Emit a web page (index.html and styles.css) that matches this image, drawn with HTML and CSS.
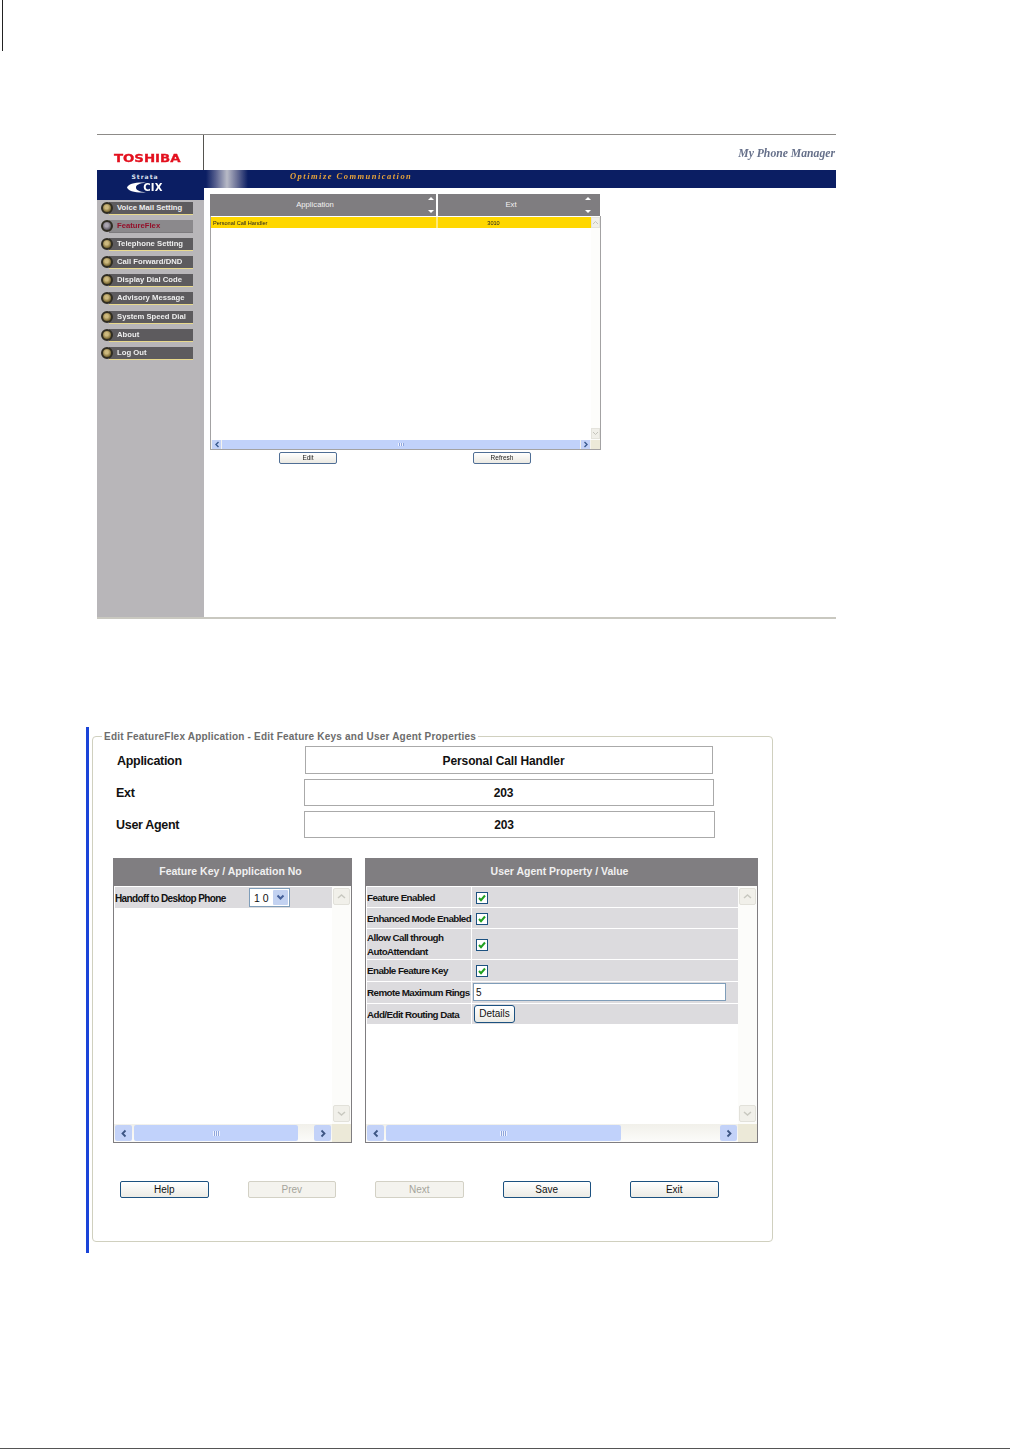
FILE: index.html
```html
<!DOCTYPE html>
<html lang="en">
<head>
<meta charset="utf-8">
<title>My Phone Manager</title>
<link rel="stylesheet" href="styles.css">
</head>
<body>
<div class="crop-mark"></div>

<section class="app">
  <div class="app-left">
    <div class="logo-cell"><span class="toshiba">TOSHIBA</span></div>
    <div class="brand">
      <span class="brand-strata">Strata</span>
      <span class="brand-cix"><svg class="swoosh" width="19" height="11" viewBox="0 0 19 11"><path d="M19 0.5C8 0 1 2 0 5.5C1 9 8 11 19 10.5C12 9.5 9 8 9 5.5C9 3 12 1.5 19 0.5Z" fill="#fff"/></svg><span>CIX</span></span>
    </div>
    <nav class="nav">
      <a class="nav-item"><i class="bullet"></i><span class="nav-label">Voice Mail Setting</span></a>
      <a class="nav-item nav-active"><i class="bullet"></i><span class="nav-label">FeatureFlex</span></a>
      <a class="nav-item"><i class="bullet"></i><span class="nav-label">Telephone Setting</span></a>
      <a class="nav-item"><i class="bullet"></i><span class="nav-label">Call Forward/DND</span></a>
      <a class="nav-item"><i class="bullet"></i><span class="nav-label">Display Dial Code</span></a>
      <a class="nav-item"><i class="bullet"></i><span class="nav-label">Advisory Message</span></a>
      <a class="nav-item"><i class="bullet"></i><span class="nav-label">System Speed Dial</span></a>
      <a class="nav-item"><i class="bullet"></i><span class="nav-label">About</span></a>
      <a class="nav-item"><i class="bullet"></i><span class="nav-label">Log Out</span></a>
    </nav>
  </div>
  <div class="app-right">
    <header class="app-head"><span class="app-title">My Phone Manager</span></header>
    <div class="banner"><span class="banner-text">Optimize Communication</span></div>
    <div class="content">
      <div class="list-head">
        <div class="lh-cell lh-app"><span>Application</span><i class="sort"><b class="sort-up"></b><b class="sort-down"></b></i></div>
        <div class="lh-cell lh-ext"><span>Ext</span><i class="sort"><b class="sort-up"></b><b class="sort-down"></b></i></div>
      </div>
      <div class="list-box">
        <div class="list-main">
          <div class="list-rows">
            <div class="list-row"><span class="lr-app">Personal Call Handler</span><span class="lr-ext">3010</span></div>
          </div>
          <div class="mini-v">
            <span class="mini-vbtn"><svg width="7" height="5" viewBox="0 0 7 5"><path d="M1 4L3.5 1.5L6 4" fill="none" stroke="#c4c4bc"/></svg></span>
            <span class="mini-vbtn"><svg width="7" height="5" viewBox="0 0 7 5"><path d="M1 1L3.5 3.5L6 1" fill="none" stroke="#c4c4bc"/></svg></span>
          </div>
        </div>
        <div class="mini-h">
          <span class="mini-hbtn"><svg width="6" height="7" viewBox="0 0 6 7"><path d="M4.5 1L2 3.5L4.5 6" fill="none" stroke="#3a5a90" stroke-width="1.4"/></svg></span>
          <span class="mini-thumb"><span class="grip"></span></span>
          <span class="mini-hbtn"><svg width="6" height="7" viewBox="0 0 6 7"><path d="M1.5 1L4 3.5L1.5 6" fill="none" stroke="#3a5a90" stroke-width="1.4"/></svg></span>
          <span class="mini-corner"></span>
        </div>
      </div>
      <div class="list-actions">
        <button class="mini-button" type="button">Edit</button>
        <button class="mini-button" type="button">Refresh</button>
      </div>
    </div>
  </div>
</section>
<div class="app-rule"></div>

<section class="editor">
  <fieldset class="frame">
    <legend class="frame-legend">Edit FeatureFlex Application - Edit Feature Keys and User Agent Properties</legend>

    <div class="field field-a"><span class="field-label">Application</span><div class="field-box">Personal Call Handler</div></div>
    <div class="field field-b"><span class="field-label">Ext</span><div class="field-box">203</div></div>
    <div class="field field-c"><span class="field-label">User Agent</span><div class="field-box">203</div></div>

    <div class="tables">
      <div class="tbl tbl-left">
        <div class="tbl-head">Feature Key / Application No</div>
        <div class="tbl-main">
          <div class="tbl-rows">
            <div class="key-row">
              <span class="key-label">Handoff to Desktop Phone</span>
              <span class="select"><span class="select-val">1 0</span><span class="select-btn"><svg width="9" height="7" viewBox="0 0 9 7"><path d="M1.5 1.5L4.5 4.5L7.5 1.5" fill="none" stroke="#45609a" stroke-width="2"/></svg></span></span>
            </div>
          </div>
          <div class="vbar">
            <span class="vbtn"><svg width="11" height="7" viewBox="0 0 11 7"><path d="M2 5L5.5 2L9 5" fill="none" stroke="#c8c8c0" stroke-width="1.5"/></svg></span>
            <span class="vbtn"><svg width="11" height="7" viewBox="0 0 11 7"><path d="M2 2L5.5 5L9 2" fill="none" stroke="#c8c8c0" stroke-width="1.5"/></svg></span>
          </div>
        </div>
        <div class="hbar">
          <span class="hbtn"><svg width="8" height="9" viewBox="0 0 8 9"><path d="M5.5 1.5L2.5 4.5L5.5 7.5" fill="none" stroke="#3d5583" stroke-width="1.8"/></svg></span>
          <span class="thumb thumb-left"><span class="grip"></span></span>
          <span class="track"></span>
          <span class="hbtn"><svg width="8" height="9" viewBox="0 0 8 9"><path d="M2.5 1.5L5.5 4.5L2.5 7.5" fill="none" stroke="#3d5583" stroke-width="1.8"/></svg></span>
          <span class="corner"></span>
        </div>
      </div>

      <div class="tbl tbl-right">
        <div class="tbl-head">User Agent Property / Value</div>
        <div class="tbl-main">
          <div class="tbl-rows">
            <div class="prop-row"><span class="prop-name">Feature Enabled</span><span class="prop-val"><svg class="check" width="12" height="12" viewBox="0 0 12 12"><rect x=".5" y=".5" width="11" height="11" fill="#fff" stroke="#1c5180"/><path d="M3 6L5 8.2L9 3.5" fill="none" stroke="#21a121" stroke-width="2"/></svg></span></div>
            <div class="prop-row"><span class="prop-name">Enhanced Mode Enabled</span><span class="prop-val"><svg class="check" width="12" height="12" viewBox="0 0 12 12"><rect x=".5" y=".5" width="11" height="11" fill="#fff" stroke="#1c5180"/><path d="M3 6L5 8.2L9 3.5" fill="none" stroke="#21a121" stroke-width="2"/></svg></span></div>
            <div class="prop-row prop-tall"><span class="prop-name">Allow Call through<br>AutoAttendant</span><span class="prop-val"><svg class="check" width="12" height="12" viewBox="0 0 12 12"><rect x=".5" y=".5" width="11" height="11" fill="#fff" stroke="#1c5180"/><path d="M3 6L5 8.2L9 3.5" fill="none" stroke="#21a121" stroke-width="2"/></svg></span></div>
            <div class="prop-row prop-wide"><span class="prop-name">Enable Feature Key</span><span class="prop-val"><svg class="check" width="12" height="12" viewBox="0 0 12 12"><rect x=".5" y=".5" width="11" height="11" fill="#fff" stroke="#1c5180"/><path d="M3 6L5 8.2L9 3.5" fill="none" stroke="#21a121" stroke-width="2"/></svg></span></div>
            <div class="prop-row prop-wide"><span class="prop-name">Remote Maximum Rings</span><span class="prop-val prop-flush"><input class="text-input" type="text" value="5"></span></div>
            <div class="prop-row"><span class="prop-name">Add/Edit Routing Data</span><span class="prop-val prop-flush"><button class="details" type="button">Details</button></span></div>
          </div>
          <div class="vbar">
            <span class="vbtn"><svg width="11" height="7" viewBox="0 0 11 7"><path d="M2 5L5.5 2L9 5" fill="none" stroke="#c8c8c0" stroke-width="1.5"/></svg></span>
            <span class="vbtn"><svg width="11" height="7" viewBox="0 0 11 7"><path d="M2 2L5.5 5L9 2" fill="none" stroke="#c8c8c0" stroke-width="1.5"/></svg></span>
          </div>
        </div>
        <div class="hbar">
          <span class="hbtn"><svg width="8" height="9" viewBox="0 0 8 9"><path d="M5.5 1.5L2.5 4.5L5.5 7.5" fill="none" stroke="#3d5583" stroke-width="1.8"/></svg></span>
          <span class="thumb thumb-right"><span class="grip"></span></span>
          <span class="track"></span>
          <span class="hbtn"><svg width="8" height="9" viewBox="0 0 8 9"><path d="M2.5 1.5L5.5 4.5L2.5 7.5" fill="none" stroke="#3d5583" stroke-width="1.8"/></svg></span>
          <span class="corner"></span>
        </div>
      </div>
    </div>

    <div class="actions">
      <button class="action" type="button">Help</button>
      <button class="action" type="button" disabled>Prev</button>
      <button class="action" type="button" disabled>Next</button>
      <button class="action" type="button">Save</button>
      <button class="action" type="button">Exit</button>
    </div>
  </fieldset>
</section>

<div class="page-rule"></div>
</body>
</html>
```
FILE: styles.css
```css
* { box-sizing: border-box; }
html, body { margin: 0; padding: 0; background: #fff; }
body { width: 1010px; height: 1450px; overflow: hidden; font-family: "Liberation Sans", Arial, sans-serif; color: #111; position: relative; }

.crop-mark { width: 1px; height: 51px; margin-left: 2px; background: #222; }

/* ---------- first screenshot ---------- */
.app { display: flex; width: 739px; height: 483px; margin: 83px 0 0 97px; border-top: 1px solid #8d8b88; filter: blur(.35px); }
.app-left { width: 107px; display: flex; flex-direction: column; flex: none; }
.logo-cell { height: 35px; border-right: 1px solid #55534f; display: flex; align-items: flex-end; justify-content: center; padding: 0 5px 6px 0; }
.toshiba { display: inline-block; font-family: "DejaVu Sans", sans-serif; font-weight: 700; font-size: 10.5px; line-height: 12px; color: #e3101e; transform: scaleX(1.27); -webkit-text-stroke: .3px #e3101e; }
.brand { height: 30px; background: #0b1e63; display: flex; flex-direction: column; align-items: center; color: #fff; padding: 3px 11px 0 0; }
.brand-strata { font-family: "DejaVu Sans", sans-serif; font-size: 6px; line-height: 7px; font-weight: 700; letter-spacing: 1px; color: #dfe2ef; }
.brand-cix { display: flex; align-items: center; height: 12px; margin-top: 1px; }
.brand-cix span { font-family: "DejaVu Sans", sans-serif; font-weight: 700; font-size: 10px; letter-spacing: .2px; margin-left: -3px; }
.nav { flex: 1; background: #b8b6b9; display: flex; flex-direction: column; gap: 5.1px; padding-top: 2px; }
.nav-item { display: flex; align-items: center; height: 13px; margin-left: 4px; position: relative; }
.bullet { width: 12px; height: 12px; margin-top: -1px; border-radius: 50%; flex: none; background: radial-gradient(circle at 45% 40%, #cdb97e 0 25%, #7c6a34 70%); border: 2px solid #2f2c22; position: relative; z-index: 1; }
.nav-label { width: 84px; height: 13px; margin-left: -4px; padding-left: 8px; background: #5d5b5e; border-bottom: 1px solid #e8d98c; color: #eee; font-size: 7.7px; line-height: 12px; font-weight: 700; white-space: nowrap; }
.nav-active .bullet { background: radial-gradient(circle at 45% 40%, #aaa5b0 0 25%, #5f5a64 70%); }
.nav-active .nav-label { background: #8b898c; border-bottom-color: #7d7b7e; color: #94102a; }

.app-right { flex: 1; display: flex; flex-direction: column; min-width: 0; }
.app-head { height: 35px; display: flex; align-items: flex-start; justify-content: flex-end; padding: 12px 1px 0 0; }
.app-title { font-family: "Liberation Serif", serif; font-style: italic; font-weight: 700; font-size: 11.7px; line-height: 13px; color: #66708a; }
.banner { height: 18px; background: linear-gradient(90deg, #0b1e63 0, #0b1e63 2px, #5a6290 12px, #b8bac6 23px, #6a7096 33px, #0b1e63 44px); display: flex; align-items: center; padding: 0 0 6px 86px; }
.banner-text { font-family: "Liberation Serif", serif; font-style: italic; font-weight: 700; font-size: 8.5px; letter-spacing: 1.47px; color: #e8a43a; white-space: nowrap; }
.content { flex: 1; padding: 6px 0 0 6px; }
.list-head { display: flex; width: 390px; height: 22px; gap: 2px; }
.lh-cell { height: 22px; background: #7f7d80; color: #f2f2f2; font-size: 7.7px; font-weight: 400; display: flex; align-items: center; justify-content: center; position: relative; padding: 0 16px 2px 0; }
.lh-app { width: 226px; }
.lh-ext { width: 162px; }
.sort { position: absolute; right: 9px; top: 3px; bottom: 3px; display: flex; flex-direction: column; justify-content: space-between; }
.lh-app .sort { right: 2px; }
.sort-up { display: block; width: 0; height: 0; border: 3px solid transparent; border-top: 0; border-bottom: 3px solid #fff; }
.sort-down { display: block; width: 0; height: 0; border: 3px solid transparent; border-bottom: 0; border-top: 3px solid #fff; }
.list-box { width: 391px; height: 234px; border: 1px solid #a3a2a3; border-top: 0; display: flex; flex-direction: column; }
.list-main { flex: 1; display: flex; min-height: 0; }
.list-rows { flex: 1; padding-top: 1px; }
.list-row { height: 11px; background: #ffd700; display: flex; font-size: 5.6px; line-height: 12px; color: #222; }
.lr-app { width: 227px; padding-left: 2px; border-right: 2px solid #ffe97a; }
.lr-ext { flex: 1; text-align: center; padding-right: 42px; }
.mini-v { width: 9px; display: flex; flex-direction: column; justify-content: space-between; padding: 1px 0 1px; flex: none; background: #fdfdfb; }
.mini-vbtn { height: 11px; background: #f0efe9; border: 1px solid #e4e3dc; display: flex; align-items: center; justify-content: center; }
.mini-h { height: 9px; flex: none; display: flex; align-items: stretch; padding-left: 1px; background: #f4f3ee; }
.mini-hbtn { width: 9px; background: #c3d2f8; display: flex; align-items: center; justify-content: center; flex: none; }
.mini-thumb { flex: 1; background: #c1d2fb; margin: 0 1px; display: flex; align-items: center; justify-content: center; }
.mini-thumb .grip { width: 6px; height: 3px; }
.mini-corner { width: 9px; margin-left: 1px; background: #ece9d8; flex: none; }
.grip { display: block; background: repeating-linear-gradient(90deg, #eef2fe 0 1px, #8fa6dc 1px 2px); }
.list-actions { display: flex; gap: 136px; margin: 2px 0 0 69px; }
.mini-button { width: 58px; height: 12px; padding: 0; border: 1px solid #4f6e95; border-radius: 2px; background: linear-gradient(#fff, #ebe9e2); font-family: inherit; font-size: 6.5px; line-height: 10px; color: #222; }
.app-rule { width: 739px; height: 2px; margin-left: 97px; background: #c9c8c0; }

/* ---------- second screenshot ---------- */
.editor { width: 690px; height: 526px; margin: 108px 0 0 86px; border-left: 3px solid #1a44d8; padding: 3px 0 0 3px; }
.frame { margin: 0; padding: 0; width: 681px; height: 512px; border: 1px solid #d0d0bf; border-radius: 4px; min-width: 0; }
.frame-legend { margin-left: 9px; padding: 1px 2px 0; font-size: 10px; line-height: 12px; font-weight: 700; color: #6c6c6c; letter-spacing: .21px; white-space: nowrap; }
.field { display: flex; align-items: center; }
.field-label { width: 188px; padding-top: 1px; font-size: 12.5px; font-weight: 700; letter-spacing: -.3px; color: #111; flex: none; }
.field-box { height: 100%; border: 1px solid #aaa; display: flex; align-items: center; justify-content: center; padding: 1px 11px 0 0; font-size: 12px; font-weight: 700; letter-spacing: -.1px; color: #111; }
.field-a { height: 28px; margin: 3px 0 0 23px; }
.field-a .field-label { width: 188px; padding-left: 1px; }
.field-a .field-box { width: 408px; margin-left: 1px; }
.field-b { height: 27px; margin: 5px 0 0 23px; }
.field-b .field-box { width: 410px; }
.field-c { height: 27px; margin: 5px 0 0 23px; }
.field-c .field-box { width: 411px; }
.tables { display: flex; gap: 13px; margin: 20px 0 0 20px; }
.tbl { height: 285px; border: 1px solid #7f7d80; border-top: 0; display: flex; flex-direction: column; }
.tbl-left { width: 239px; }
.tbl-right { width: 393px; }
.tbl-head { height: 28px; margin: 0 -1px; padding: 0 4px 2px 0; background: #807e81; color: #f0f0f0; font-size: 10.5px; font-weight: 700; display: flex; align-items: center; justify-content: center; flex: none; }
.tbl-main { flex: 1; display: flex; min-height: 0; }
.tbl-rows { flex: 1; padding: 1px 0 0 1px; display: flex; flex-direction: column; gap: 1px; }
.vbar { width: 19px; flex: none; display: flex; flex-direction: column; justify-content: space-between; padding: 2px 1px 2px 1px; background: #fcfcfa; }
.vbtn { height: 17px; background: #f1f0ea; border: 1px solid #e2e1da; border-radius: 2px; display: flex; align-items: center; justify-content: center; }
.hbar { height: 18px; flex: none; display: flex; align-items: stretch; background: linear-gradient(#f1f0ea, #fcfcfa); padding: 1px 0 1px 1px; }
.hbtn { width: 17px; background: #c3d2f8; border-radius: 2px; display: flex; align-items: center; justify-content: center; flex: none; }
.thumb { background: #c1d2fb; margin-left: 2px; border-radius: 2px; display: flex; align-items: center; justify-content: center; flex: none; }
.thumb .grip { width: 7px; height: 5px; }
.thumb-left { width: 164px; }
.thumb-right { width: 235px; }
.track { flex: 1; }
.corner { width: 19px; margin: -1px 0; background: #ece9d8; flex: none; margin-left: 1px; }
.key-row { height: 21px; display: flex; align-items: center; background: #dcdbde; font-size: 10px; font-weight: 700; position: relative; }
.key-label { width: 134px; padding-top: 1px; letter-spacing: -.62px; white-space: nowrap; flex: none; }
.select { width: 41px; height: 19px; background: #fff; border: 1px solid #7f9db9; display: flex; align-items: center; justify-content: space-between; padding: 1px; font-weight: 400; font-size: 10.5px; }
.select-val { padding-left: 3px; }
.select-btn { width: 15px; height: 15px; background: #c3d2f1; border-radius: 1px; display: flex; align-items: center; justify-content: center; }
.prop-row { display: flex; gap: 1px; height: 20px; }
.prop-tall { height: 30px; }
.prop-wide { height: 21px; }
.prop-name { width: 104px; padding-top: 1px; background: #dcdbde; font-size: 9.8px; line-height: 14px; font-weight: 700; letter-spacing: -.56px; white-space: nowrap; display: flex; align-items: center; color: #151515; }
.prop-val { flex: 1; background: #dcdbde; display: flex; align-items: center; padding: 1px 0 0 4px; }
.prop-flush { padding: 0 0 1px 1px; }
.text-input { width: 253px; height: 18px; padding: 0 2px; border: 1px solid #7f9db9; background: #fff; font-family: inherit; font-size: 10px; color: #111; outline: 0; }
.details { width: 41px; height: 18px; margin-left: 1px; padding: 0 0 1px; border: 1px solid #1c5180; border-radius: 3px; background: linear-gradient(#fff, #ecebe5); font-family: inherit; font-size: 10px; color: #111; }
.actions { display: flex; gap: 39px; margin: 38px 0 0 27px; }
.action { width: 88.5px; height: 17px; padding: 0; border: 1px solid #1c5180; border-radius: 2px; background: linear-gradient(#fff, #ecebe5); font-family: inherit; font-size: 10px; color: #111; }
.action:disabled { border-color: #d3d1c5; background: #f4f3ee; color: #a5a49b; }

.page-rule { position: absolute; left: 0; right: 0; top: 1448px; height: 1px; background: #555; }
```
